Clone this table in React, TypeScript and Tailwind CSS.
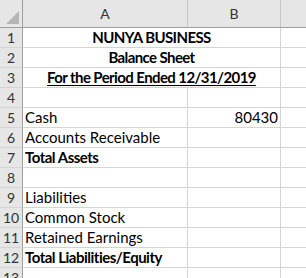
import React from "react";

type Row = {
  a?: string;
  b?: string;
  bold?: boolean;
  title?: boolean;
  underline?: boolean;
};

const rows: Row[] = [
  { a: "NUNYA BUSINESS", bold: true, title: true },
  { a: "Balance Sheet", bold: true, title: true },
  { a: "For the Period Ended 12/31/2019", bold: true, title: true, underline: true },
  {},
  { a: "Cash", b: "80430" },
  { a: "Accounts Receivable" },
  { a: "Total Assets", bold: true },
  {},
  { a: "Liabilities" },
  { a: "Common Stock" },
  { a: "Retained Earnings" },
  { a: "Total Liabilities/Equity", bold: true },
  {},
];

export default function App() {
  return (
    <div className="w-[306px] h-[278px] overflow-hidden bg-white text-black font-['Lato','Liberation_Sans',sans-serif] text-[15px]">
      {/* column headers */}
      <div className="flex h-[28px] bg-[#e6e6e6] border-b border-[#9e9e9e]">
        <div className="w-[23px] shrink-0 border-r border-[#9e9e9e] flex items-end justify-end p-[3px]">
          <div className="w-0 h-0 border-l-[13px] border-l-transparent border-b-[13px] border-b-[#b5b5b5]" />
        </div>
        <div className="w-[165px] shrink-0 border-r border-[#c8c8c8] flex items-center justify-center text-[#333] text-[14px]">
          A
        </div>
        <div className="w-[93px] shrink-0 border-r border-[#c8c8c8] flex items-center justify-center text-[#333] text-[14px]">
          B
        </div>
        <div className="flex-1" />
      </div>

      {rows.map((r, i) => (
        <div key={i} className="flex h-[20px]">
          <div className="w-[23px] shrink-0 bg-[#e6e6e6] border-r border-b border-r-[#9e9e9e] border-b-[#d4d4d4] flex items-center justify-center text-[#333] text-[14px]">
            {i + 1}
          </div>
          {r.title ? (
            <div className="w-[258px] shrink-0 border-r border-b border-[#d4d4d4] flex items-end justify-center leading-[19px] whitespace-nowrap">
              <span className={`font-bold tracking-[-0.6px] ${r.underline ? "underline underline-offset-2" : ""}`}>{r.a}</span>
            </div>
          ) : (
            <>
              <div className="w-[165px] shrink-0 border-r border-b border-[#d4d4d4] flex items-end pl-[2px] leading-[19px] whitespace-nowrap">
                <span className={r.bold ? "font-bold tracking-[-0.5px]" : ""}>{r.a}</span>
              </div>
              <div className="w-[93px] shrink-0 border-r border-b border-[#d4d4d4] flex items-end justify-end pr-[2px] leading-[19px]">
                {r.b}
              </div>
            </>
          )}
          <div className="flex-1 border-b border-[#d4d4d4]" />
        </div>
      ))}
    </div>
  );
}
